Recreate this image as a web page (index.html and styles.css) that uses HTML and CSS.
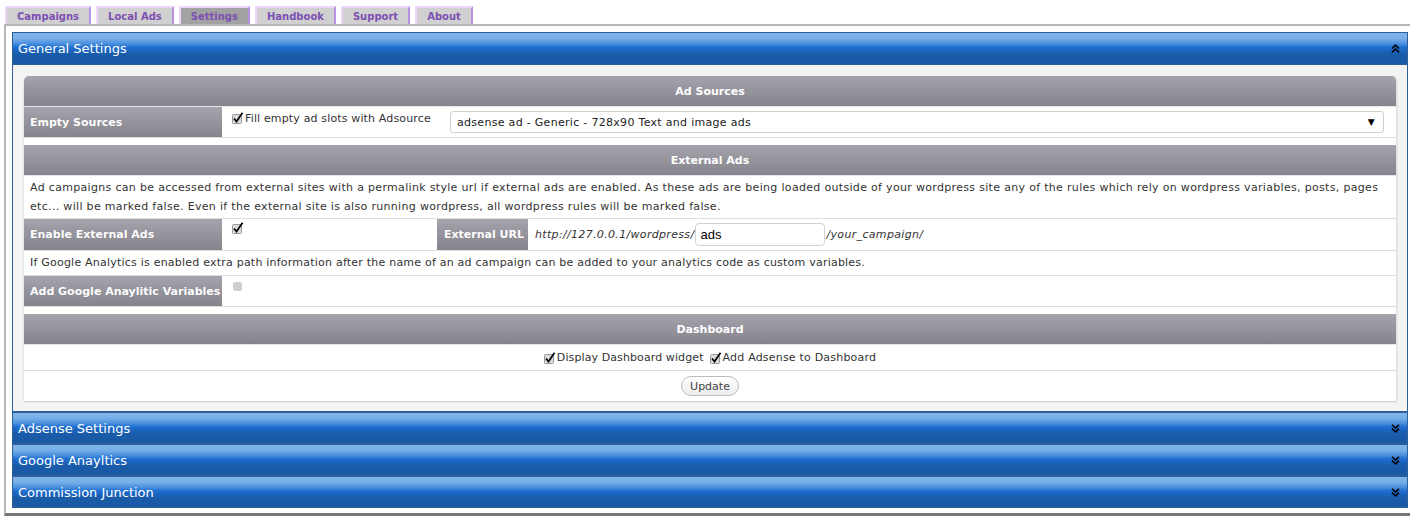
FILE: index.html
```html
<!DOCTYPE html>
<html>
<head>
<meta charset="utf-8">
<title>Settings</title>
<link rel="stylesheet" href="styles.css">
</head>
<body>
<div class="tabs">
  <a class="tab">Campaigns</a>
  <a class="tab">Local Ads</a>
  <a class="tab active">Settings</a>
  <a class="tab">Handbook</a>
  <a class="tab">Support</a>
  <a class="tab">About</a>
</div>
<div class="wrap">
  <div class="accordion">
    <div class="acc-head first">
      <span>General Settings</span>
      <svg class="chev" width="9" height="9" viewBox="0 0 9 9"><polyline points="1,4.5 4.5,1.2 8,4.5" /><polyline points="1,8.3 4.5,5 8,8.3" /></svg>
    </div>
    <div class="acc-body">
      <div class="panel">
        <div class="sec-head">Ad Sources</div>
        <div class="row grid r-empty">
          <div class="label">Empty Sources</div>
          <div class="cell chk-cell fill"><svg class="cb" width="12" height="12" viewBox="0 0 12 12"><rect x="0.5" y="2.5" width="9" height="9" rx="1"/><polyline points="2,6.5 4.5,9.5 10.5,0.8"/></svg>Fill empty ad slots with Adsource</div>
          <div class="cell select-cell"><div class="select"><span>adsense ad - Generic - 728x90 Text and image ads</span><span class="arrow">▼</span></div></div>
        </div>
        <div class="spacer"></div>
        <div class="sec-head">External Ads</div>
        <div class="row text-row desc">Ad campaigns can be accessed from external sites with a permalink style url if external ads are enabled. As these ads are being loaded outside of your wordpress site any of the rules which rely on wordpress variables, posts, pages etc... will be marked false. Even if the external site is also running wordpress, all wordpress rules will be marked false.</div>
        <div class="row grid r-ext">
          <div class="label">Enable External Ads</div>
          <div class="cell chk-cell"><svg class="cb" width="12" height="12" viewBox="0 0 12 12"><rect x="0.5" y="2.5" width="9" height="9" rx="1"/><polyline points="2,6.5 4.5,9.5 10.5,0.8"/></svg></div>
          <div class="label small">External URL</div>
          <div class="cell url-cell"><em>http://127.0.0.1/wordpress/</em><input class="txt" type="text" value="ads"><em>/your_campaign/</em></div>
        </div>
        <div class="row text-row note">If Google Analytics is enabled extra path information after the name of an ad campaign can be added to your analytics code as custom variables.</div>
        <div class="row grid r-ga">
          <div class="label">Add Google Anaylitic Variables</div>
          <div class="cell chk-cell"><span class="cb-off"></span></div>
        </div>
        <div class="spacer"></div>
        <div class="sec-head">Dashboard</div>
        <div class="row center-row">
          <svg class="cb" width="12" height="12" viewBox="0 0 12 12"><rect x="0.5" y="2.5" width="9" height="9" rx="1"/><polyline points="2,6.5 4.5,9.5 10.5,0.8"/></svg><span class="d1">Display Dashboard widget</span>
          <svg class="cb second" width="12" height="12" viewBox="0 0 12 12"><rect x="0.5" y="2.5" width="9" height="9" rx="1"/><polyline points="2,6.5 4.5,9.5 10.5,0.8"/></svg><span class="d2">Add Adsense to Dashboard</span>
        </div>
        <div class="row btn-row"><button class="btn">Update</button></div>
      </div>
    </div>
    <div class="acc-head">
      <span>Adsense Settings</span>
      <svg class="chev" width="9" height="9" viewBox="0 0 9 9"><polyline points="1,0.8 4.5,4 8,0.8" /><polyline points="1,4.6 4.5,7.8 8,4.6" /></svg>
    </div>
    <div class="acc-head">
      <span>Google Anayltics</span>
      <svg class="chev" width="9" height="9" viewBox="0 0 9 9"><polyline points="1,0.8 4.5,4 8,0.8" /><polyline points="1,4.6 4.5,7.8 8,4.6" /></svg>
    </div>
    <div class="acc-head">
      <span>Commission Junction</span>
      <svg class="chev" width="9" height="9" viewBox="0 0 9 9"><polyline points="1,0.8 4.5,4 8,0.8" /><polyline points="1,4.6 4.5,7.8 8,4.6" /></svg>
    </div>
  </div>
</div>
</body>
</html>
```
FILE: styles.css
```css
html, body {
  margin: 0;
  padding: 0;
  background: #ffffff;
  overflow: hidden;
}
body {
  font-family: "DejaVu Sans", Verdana, sans-serif;
  font-size: 11px;
  color: #333;
}
.tabs {
  display: flex;
  gap: 5px;
  padding: 6px 0 0 5px;
  height: 18px;
}
.tab {
  display: flex;
  align-items: center;
  height: 16px;
  padding: 0 10px;
  background: #d0d0d0;
  border-top: 2px solid #eed6fb;
  border-left: 2px solid #eed6fb;
  border-right: 2px solid #b792e2;
  color: #7d4fb2;
  font-weight: bold;
  font-size: 10px;
}
.tab.active {
  background: #a2a2a2;
}
.wrap {
  margin: 0 -6px 0 4px;
  border-style: solid;
  border-width: 2px 2px 3px 2px;
  border-color: #b6b6b6 #b6b6b6 #767676 #b6b6b6;
  padding: 6px 6px 5px 6px;
  background: #fff;
}
.accordion {
  border: 1px solid #2d609a;
  border-top: none;
}
.acc-head {
  display: flex;
  align-items: center;
  justify-content: space-between;
  height: 30px;
  padding: 0 7px 0 5px;
  border-top: 2px solid #2d609a;
  background: linear-gradient(to bottom, #82b5ea 0%, #77aee8 18%, #4b90de 34%, #1f70d2 46%, #1b63bb 58%, #195ba7 72%, #185aa5 100%);
  color: #fff;
  font-size: 13px;
}
.acc-head.first {
  height: 31px;
  border-top-width: 1px;
  border-bottom: 1px solid #2d609a;
}
.chev polyline {
  fill: none;
  stroke: #000;
  stroke-width: 1.6;
}
.acc-body {
  background: #f4f4f4;
  padding: 11px 10px 10px 11px;
}
.panel {
  background: #fff;
  border-radius: 5px 5px 0 0;
  border-right: 1px solid #e2e2e2;
  box-shadow: 0 1px 2px rgba(0, 0, 0, 0.18);
  overflow: hidden;
}
.sec-head {
  height: 30px;
  display: flex;
  align-items: center;
  justify-content: center;
  background: linear-gradient(to bottom, #a5a4ad, #85848c);
  color: #fff;
  font-weight: bold;
  border-bottom: 1px solid #e6e6e6;
}
.row {
  border-bottom: 1px solid #dedede;
}
.grid {
  display: grid;
  grid-template-columns: 198px 215px 91px 1fr;
}
.label {
  display: flex;
  align-items: center;
  padding-left: 6px;
  background: linear-gradient(to bottom, #a5a4ad, #85848c);
  color: #fff;
  font-weight: bold;
  text-shadow: 0 0 1px rgba(0, 0, 0, 0.15);
}
.label.small {
  padding-left: 7px;
}
.cell {
  padding: 5px 0 0 10px;
}
.chk-cell {
  display: flex;
  align-items: flex-start;
  line-height: 13px;
}
.fill {
  letter-spacing: 0.15px;
}
.r-empty {
  height: 30px;
}
.r-empty .chk-cell {
  padding-top: 5px;
}
.select-cell {
  grid-column: 3 / 5;
  padding: 4px 12px 0 13px;
}
.select {
  height: 20px;
  border: 1px solid #cfcfcf;
  border-radius: 3px;
  background: #fff;
  display: flex;
  align-items: center;
  justify-content: space-between;
  padding: 0 8px 0 6px;
  color: #222;
  letter-spacing: 0.3px;
}
.arrow {
  font-size: 9px;
  color: #000;
}
.cb {
  flex: none;
  margin-right: 1px;
}
.cb rect {
  fill: #dcdcdc;
  stroke: #9a9a9a;
  stroke-width: 1;
}
.cb polyline {
  fill: none;
  stroke: #000;
  stroke-width: 1.7;
}
.spacer {
  height: 7px;
}
.text-row {
  padding: 0 6px;
}
.desc {
  line-height: 19px;
  padding-top: 2px;
  height: 40px;
  letter-spacing: 0.32px;
}
.note {
  height: 24px;
  line-height: 24px;
  letter-spacing: 0.22px;
}
.r-ext {
  height: 31px;
}
.r-ext .chk-cell {
  padding-top: 3px;
}
.url-cell {
  display: flex;
  align-items: center;
  padding: 0 0 0 7px;
  letter-spacing: 0.33px;
}
.url-cell em {
  font-style: italic;
}
.txt {
  width: 130px;
  height: 23px;
  box-sizing: border-box;
  border: 1px solid #d2d2d2;
  border-radius: 4px;
  padding: 0 4px;
  margin: 0 1px;
  font-family: "Liberation Sans", Arial, sans-serif;
  font-size: 13px;
  letter-spacing: 0;
  color: #000;
  outline: none;
}
.r-ga {
  height: 30px;
}
.r-ga .chk-cell {
  padding-top: 6px;
}
.cb-off {
  display: block;
  width: 9px;
  height: 9px;
  border-radius: 2px;
  background: #cfcfcf;
  margin-left: 1px;
}
.center-row {
  height: 25px;
  display: flex;
  align-items: center;
  justify-content: center;
}
.d1 {
  letter-spacing: 0.1px;
}
.d2 {
  letter-spacing: 0.2px;
}
.center-row .second {
  margin-left: 6px;
}
.btn-row {
  height: 30px;
  border-bottom: none;
  display: flex;
  align-items: center;
  justify-content: center;
}
.btn {
  height: 20px;
  width: 58px;
  padding: 0;
  border: 1px solid #bdbdbd;
  border-radius: 10px;
  background: linear-gradient(to bottom, #ffffff, #ececec);
  font-family: "DejaVu Sans", Verdana, sans-serif;
  font-size: 11px;
  color: #444;
}
```
